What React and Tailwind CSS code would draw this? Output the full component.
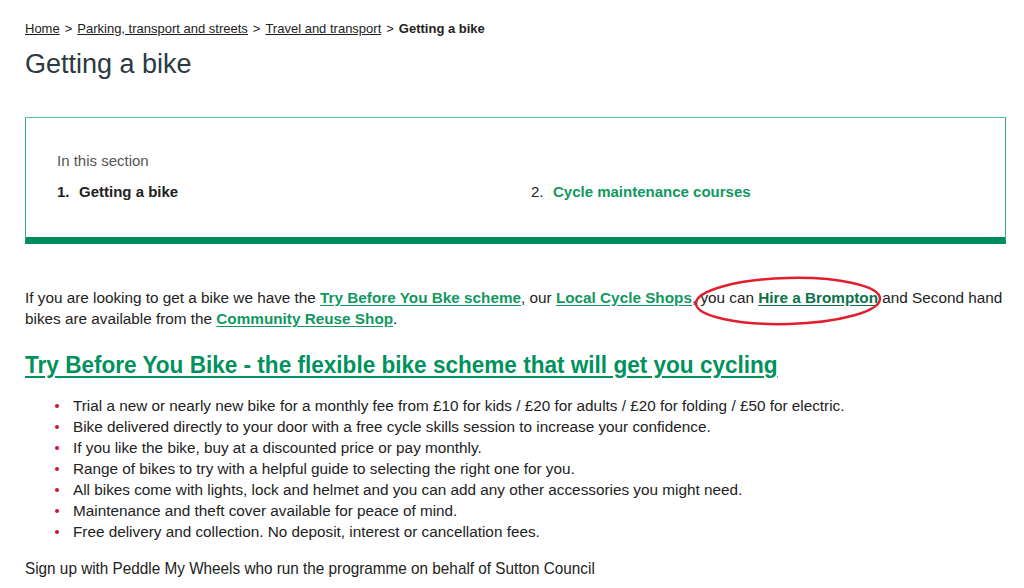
export default function App() {
    const bullets = [
        "Trial a new or nearly new bike for a monthly fee from £10 for kids / £20 for adults / £20 for folding / £50 for electric.",
        "Bike delivered directly to your door with a free cycle skills session to increase your confidence.",
        "If you like the bike, buy at a discounted price or pay monthly.",
        "Range of bikes to try with a helpful guide to selecting the right one for you.",
        "All bikes come with lights, lock and helmet and you can add any other accessories you might need.",
        "Maintenance and theft cover available for peace of mind.",
        "Free delivery and collection. No deposit, interest or cancellation fees.",
    ];

    const link = "font-bold text-[#11985f] underline underline-offset-2";

    return (
        <div className="min-h-[588px] bg-white pl-[25px] pr-[18px] pt-[20px] text-[#222] font-['Liberation_Sans',Arial,sans-serif]">
            <nav className="text-[13px] leading-[18px]">
                <a className="underline">Home</a>
                <span className="mx-[5px]">&gt;</span>
                <a className="underline">Parking, transport and streets</a>
                <span className="mx-[5px]">&gt;</span>
                <a className="underline">Travel and transport</a>
                <span className="mx-[5px]">&gt;</span>
                <span className="font-bold">Getting a bike</span>
            </nav>

            <h1 className="mt-[10px] text-[27px] leading-[32px] text-[#2b3a42]">Getting a bike</h1>

            <div className="mt-[37px] border-x border-t border-b-[7px] border-solid border-x-[#2fb47f] border-t-[#5cc59b] border-b-[#008c5a] px-[31px] pt-[33px] pb-[35px]">
                <p className="text-[15px] leading-[20px] text-[#555]">In this section</p>
                <ol className="mt-[11px] grid grid-cols-[474px_1fr] text-[15px] leading-[20px]">
                    <li className="flex">
                        <span className="w-[22px] font-bold">1.</span>
                        <span className="font-bold">Getting a bike</span>
                    </li>
                    <li className="flex">
                        <span className="w-[22px]">2.</span>
                        <a className="font-bold text-[#11985f]">Cycle maintenance courses</a>
                    </li>
                </ol>
            </div>

            <p className="mt-[43px] text-[15.3px] leading-[21px]">
                If you are looking to get a bike we have the <a className={link}>Try Before You Bke scheme</a>, our{" "}
                <a className={link}>Local Cycle Shops</a>,{" "}
                <span className="relative">
                    you can <a className="font-bold text-[#0d7148] underline underline-offset-2">Hire a Brompton</a>
                    <svg
                        className="pointer-events-none absolute left-[-7px] top-[-13px] h-[50px] w-[190px] overflow-visible"
                        viewBox="0 0 190 50"
                    >
                        <ellipse cx="95" cy="25" rx="92" ry="23" fill="none" stroke="#e11d2e" strokeWidth="2.5" transform="rotate(-1.5 95 25)" />
                    </svg>
                </span>{" "}
                and Second hand bikes are available from the <a className={link}>Community Reuse Shop</a>.
            </p>

            <h2 className="mt-[22px] text-[24px] leading-[28px] font-bold text-[#00925c]">
                <span className="inline-block origin-left scale-x-[0.94] whitespace-nowrap underline underline-offset-[3px]">
                    Try Before You Bike - the flexible bike scheme that will get you cycling
                </span>
            </h2>

            <ul className="mt-[16px] pl-[30px] text-[15.3px] leading-[21px]">
                {bullets.map((b) => (
                    <li key={b} className="flex items-center">
                        <span className="mr-[14px] h-[4px] w-[4px] shrink-0 rounded-full bg-[#d6103b]" />
                        <span>{b}</span>
                    </li>
                ))}
            </ul>

            <p className="mt-[16px] text-[17px] leading-[21px]">
                <span className="inline-block origin-left scale-x-[0.9] whitespace-nowrap">
                    Sign up with Peddle My Wheels who run the programme on behalf of Sutton Council
                </span>
            </p>
        </div>
    );
}
